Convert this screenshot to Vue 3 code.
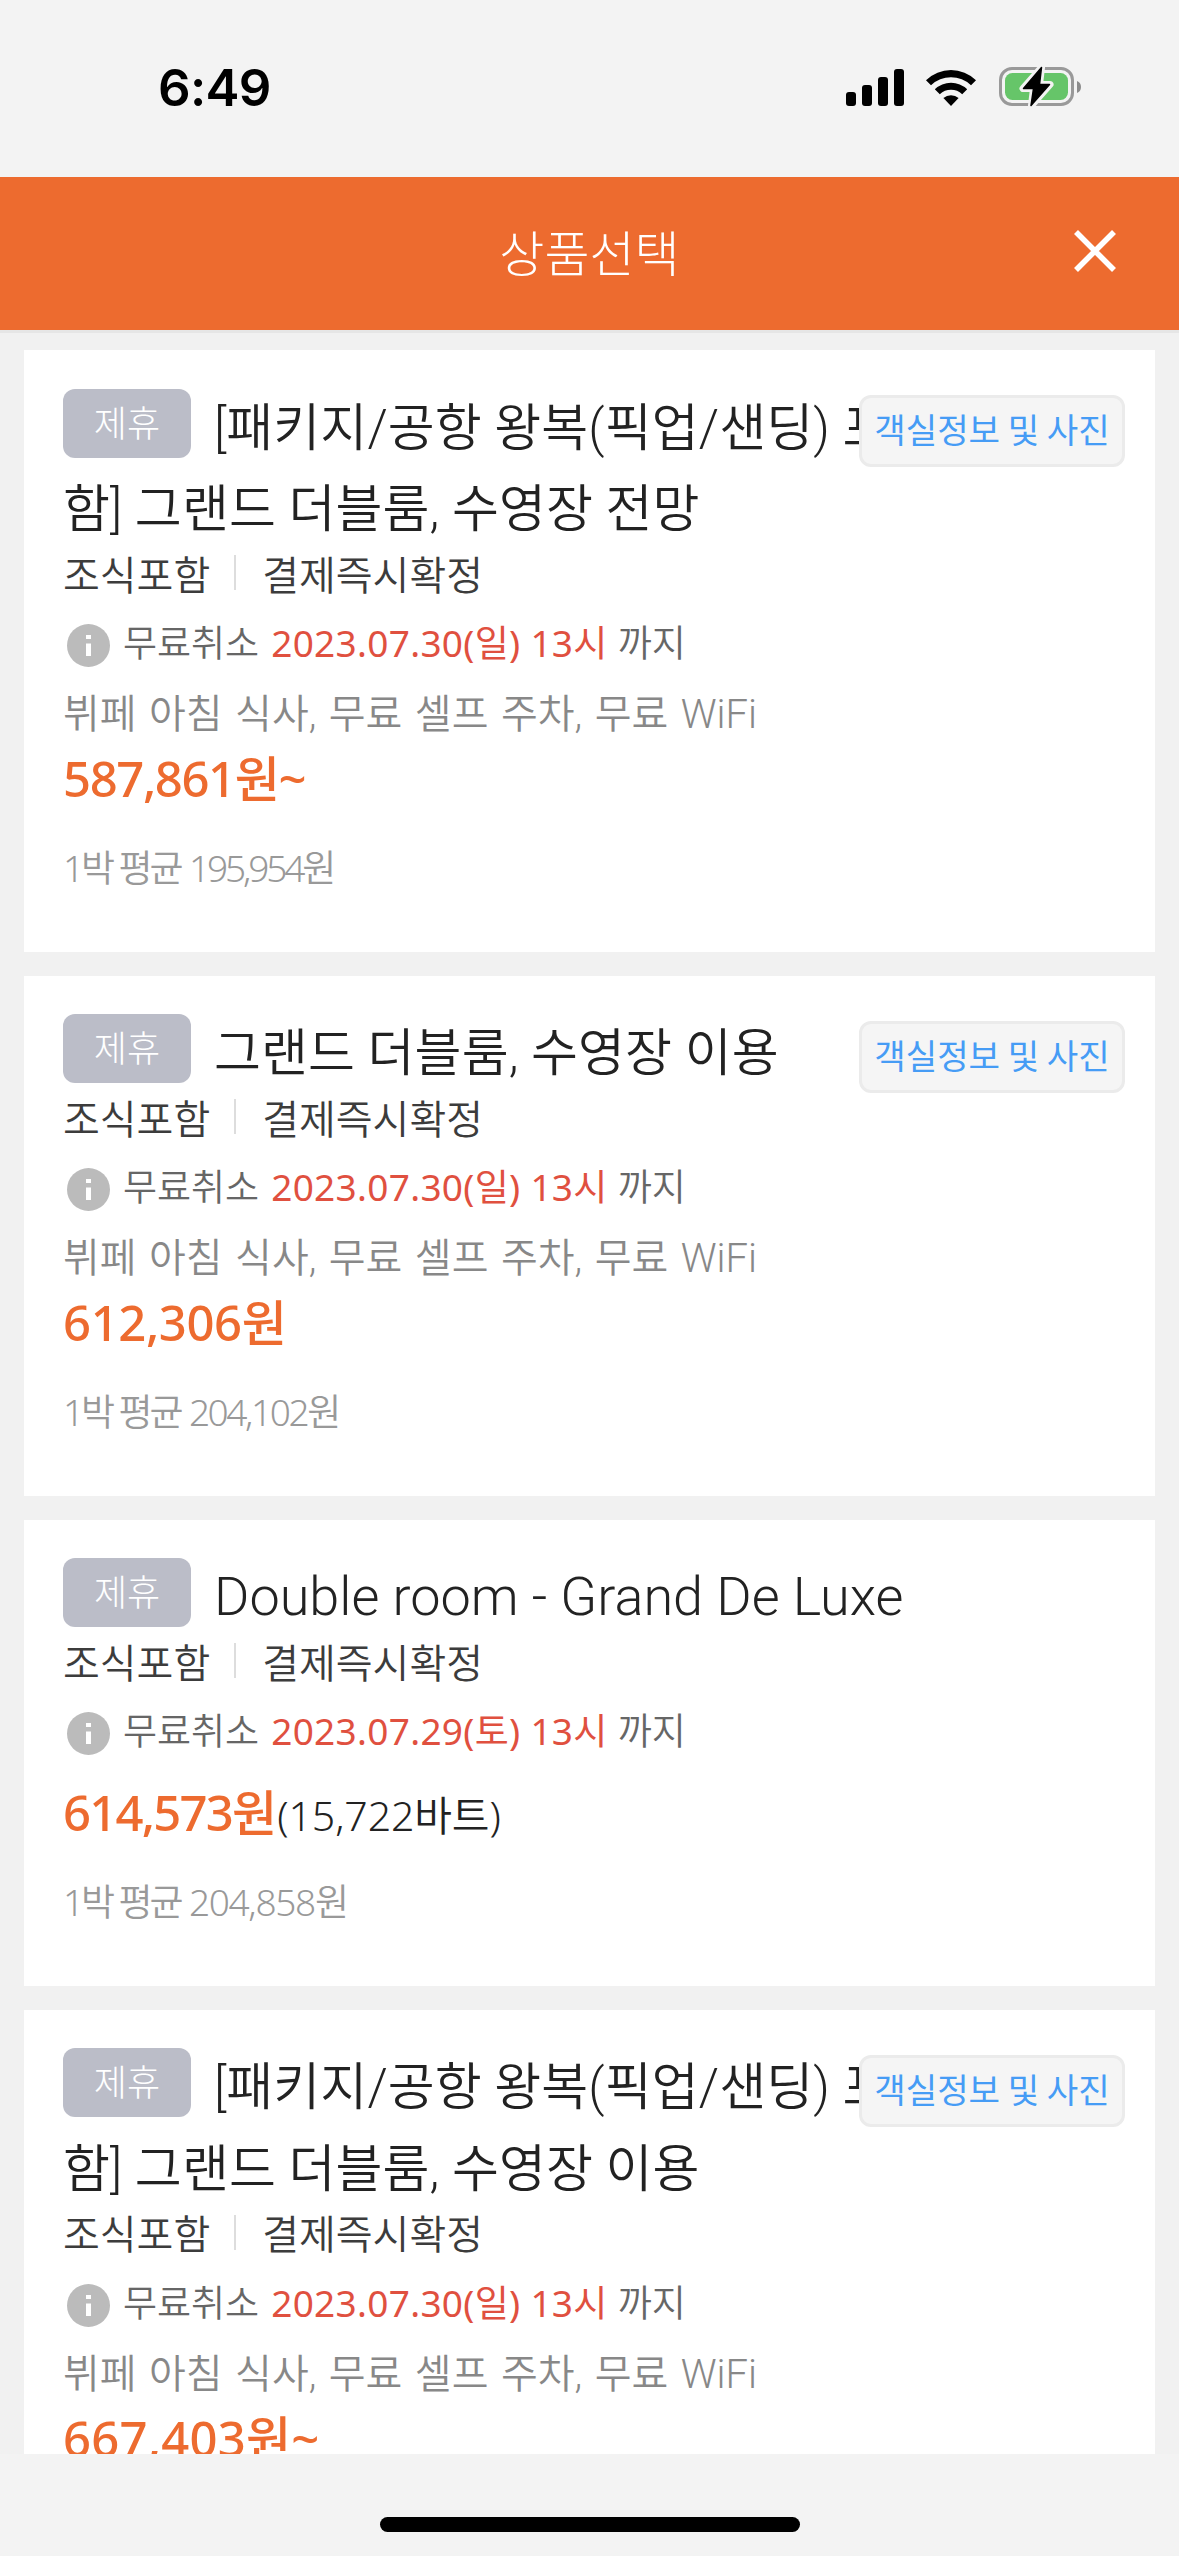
<script setup>
const packageName = '[패키지/공항 왕복(픽업/샌딩) 포함] 그랜드 더블룸, 수영장 '
const amenities = '뷔페 아침 식사, 무료 셀프 주차, 무료 WiFi'

const products = [
  { name: packageName + '전망', date: '2023.07.30(일) 13시', amenities, price: '587,861원~', average: '195,954원', photos: true, tracking: -1.4, averageTracking: -3.1 },
  { name: '그랜드 더블룸, 수영장 이용', date: '2023.07.30(일) 13시', amenities, price: '612,306원', average: '204,102원', photos: true, tracking: -0.4, averageTracking: -2.4 },
  { name: 'Double room - Grand De Luxe', latin: true, date: '2023.07.29(토) 13시', price: '614,573원', local: '(15,722바트)', average: '204,858원', tracking: -1.8, averageTracking: -1.3 },
  { name: packageName + '이용', date: '2023.07.30(일) 13시', amenities, price: '667,403원~', average: '222,468원', photos: true, tracking: 0.2, averageTracking: -1.4 },
]
</script>

<template>
  <main class="screen">
    <header class="status">
      <span class="time">6:49</span>
      <div class="indicators">
        <svg class="signal" width="58" height="38" viewBox="0 0 58 38">
          <rect x="0" y="23" width="10" height="14" rx="3" />
          <rect x="16" y="16" width="10" height="21" rx="3" />
          <rect x="32" y="8" width="10" height="29" rx="3" />
          <rect x="48" y="0" width="10" height="37" rx="3" />
        </svg>
        <svg class="wifi" width="52" height="38" viewBox="0 0 52 38">
          <path d="M1 11.2a36 36 0 0 1 50 0l-5 5a29 29 0 0 0-40 0z" />
          <path d="M9.8 20.2a23.5 23.5 0 0 1 32.4 0l-5 5a16.5 16.5 0 0 0-22.4 0z" />
          <path d="M18.4 29a11.5 11.5 0 0 1 15.2 0L26 37z" />
        </svg>
        <svg class="battery" width="83" height="42" viewBox="0 0 83 42">
          <rect x="1.5" y="2.5" width="72" height="36" rx="11.5" fill="none" stroke="#999" stroke-width="3" />
          <rect x="6" y="7" width="63" height="27" rx="7.5" fill="#66c569" />
          <path d="M78 15a6.5 6.5 0 0 1 0 12z" fill="#8c8c8c" />
          <path d="M42.5 1.5 24 22.5H34.5L32.5 39.5 51 18.5H40.5z" fill="#000" stroke="#f3f3f3" stroke-width="7" stroke-linejoin="round" />
          <path d="M42.5 1.5 24.5 22.5H34.5L32 39.5 50.5 18.5H40.5z" fill="#000" stroke="#000" stroke-width="1.5" stroke-linejoin="round" />
        </svg>
      </div>
    </header>

    <div class="bar">
      <h1 class="bar-title">상품선택</h1>
      <svg class="close" width="42" height="42" viewBox="0 0 42 42">
        <path d="M2 2 40 40M40 2 2 40" stroke="#fff" stroke-width="5.6" />
      </svg>
    </div>

    <section class="list">
      <article v-for="(item, i) in products" :key="i" class="card">
        <h2 class="name" :class="{ latin: item.latin }"><span class="badge">제휴</span>{{ item.name }}</h2>
        <button v-if="item.photos" class="photos">객실정보 및 사진</button>
        <div class="terms"><span>조식포함</span><i class="divider"></i><span>결제즉시확정</span></div>
        <div class="cancel">
          <svg class="info" width="43" height="43" viewBox="0 0 43 43">
            <circle cx="21.5" cy="21.5" r="21.5" fill="#bbb" />
            <path d="M19 11h5v4h-5zM19 19.5h5v12.5h-5z" fill="#fff" />
          </svg>
          <span>무료취소</span><span class="date">{{ item.date }}</span><span>까지</span>
        </div>
        <p v-if="item.amenities" class="amenities">{{ item.amenities }}</p>
        <p class="price" :class="{ spaced: !item.amenities }">
          <strong :style="{ letterSpacing: item.tracking + 'px' }">{{ item.price }}</strong><span v-if="item.local" class="local">{{ item.local }}</span>
        </p>
        <p class="average">1박 평균 <span class="amount" :style="{ letterSpacing: item.averageTracking + 'px' }">{{ item.average }}</span></p>
      </article>
    </section>

    <footer class="home"><i class="home-bar"></i></footer>
  </main>
</template>

<style>
body {
  background: #f3f3f3;
}
</style>

<style scoped>
.screen {
  display: flex;
  flex-direction: column;
  width: 1179px;
  height: 2556px;
  overflow: hidden;
  background: #f3f3f3;
  font-family: "Noto Sans", "Noto Sans CJK KR", sans-serif;
}
h1, h2, p {
  margin: 0;
  font-weight: 350;
}
.status {
  display: flex;
  flex: none;
  justify-content: space-between;
  box-sizing: border-box;
  height: 177px;
  padding: 57px 97px 0 158px;
}
.time {
  font: 600 51px/62px Inter, sans-serif;
  letter-spacing: -0.7px;
}
.indicators {
  display: flex;
  align-items: flex-start;
  padding-top: 9px;
}
.signal, .wifi {
  margin-top: 3px;
}
.wifi {
  margin-left: 21px;
}
.battery {
  margin-left: 22px;
}
.bar {
  display: flex;
  flex: none;
  align-items: center;
  justify-content: center;
  position: relative;
  height: 153px;
  background: #ed6b2f;
  border-bottom: 3px solid #e6e6e6;
}
.bar-title {
  padding-bottom: 5px;
  font: 300 49px/60px "Noto Sans CJK KR", sans-serif;
  color: #fff;
}
.close {
  position: absolute;
  right: 63px;
  top: 53px;
}
.list {
  display: flex;
  flex: 1;
  flex-direction: column;
  gap: 24px;
  min-height: 0;
  padding: 17px 24px 0;
  overflow: hidden;
  background: #f1f1f1;
}
.card {
  flex: none;
  position: relative;
  box-sizing: border-box;
  padding: 37.5px 39px 58.7px;
  background: #fff;
}
.name {
  width: 870px;
  font: 350 51px/81.5px Roboto, "Noto Sans CJK KR", sans-serif;
  letter-spacing: 0.1px;
  word-break: break-all;
  color: #222;
}
.name.latin {
  margin-top: -1px;
  padding-bottom: 1px;
  font-size: 54px;
  font-weight: 300;
  letter-spacing: 0;
}
.badge {
  display: inline-block;
  width: 128px;
  height: 69px;
  margin-right: 23px;
  border-radius: 12px;
  background: #bbbdc8;
  vertical-align: 9px;
  font: 300 36px/65px "Noto Sans CJK KR", sans-serif;
  text-align: center;
  color: #fff;
}
.photos {
  position: absolute;
  top: 45px;
  right: 30px;
  box-sizing: border-box;
  width: 266px;
  height: 72px;
  padding: 0 0 6px;
  border: 3px solid #ebebeb;
  border-radius: 12px;
  background: #f5f5f5;
  font: 400 34.2px/56px "Noto Sans CJK KR", sans-serif;
  white-space: nowrap;
  color: #469cf5;
}
.terms {
  display: flex;
  align-items: center;
  height: 44px;
  font: 350 40px/44px "Noto Sans CJK KR", sans-serif;
  color: #3c3c3c;
}
.divider {
  width: 2px;
  height: 35px;
  margin: 0 26px 0 24px;
  background: #ddd;
}
.cancel {
  display: flex;
  align-items: center;
  height: 60px;
  margin-top: 18.5px;
  padding-left: 4px;
  font: 350 37px/60px "Noto Sans", "Noto Sans CJK KR", sans-serif;
  color: #666;
}
.info {
  margin: 5px 13px 0 0;
}
.date {
  margin: 0 10px 0 12px;
  font-weight: 400;
  letter-spacing: 0.3px;
  color: #e0503f;
}
.amenities {
  height: 60px;
  margin-top: 12px;
  font: 350 40px/60px Roboto, "Noto Sans CJK KR", sans-serif;
  word-spacing: 2.7px;
  color: #888;
}
.price {
  height: 60px;
  margin-top: 3px;
  font-size: 49px;
  line-height: 60px;
  color: #222;
}
.price.spaced {
  margin-top: 20.5px;
}
.price strong {
  font-weight: 500;
  color: #ed6b2f;
}
.local {
  margin-left: 2px;
  font-size: 41px;
  letter-spacing: -0.1px;
}
.average {
  height: 50px;
  margin-top: 35px;
  font-size: 37px;
  line-height: 50px;
  letter-spacing: -3.1px;
  color: #999;
}
.amount {
  margin-left: 2px;
}
.home {
  display: flex;
  flex: none;
  justify-content: center;
  box-sizing: border-box;
  height: 102px;
  padding-top: 63px;
}
.home-bar {
  width: 420px;
  height: 15px;
  border-radius: 8px;
  background: #000;
}
</style>
